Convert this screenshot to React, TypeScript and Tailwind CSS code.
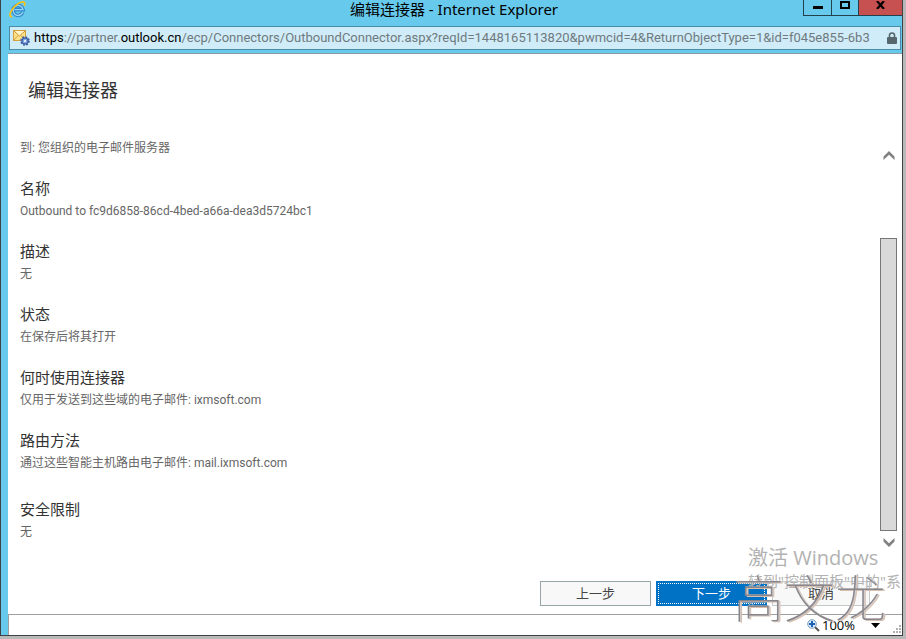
import React from "react";

const sections = [
  { title: "名称", value: "Outbound to fc9d6858-86cd-4bed-a66a-dea3d5724bc1" },
  { title: "描述", value: "无" },
  { title: "状态", value: "在保存后将其打开" },
  { title: "何时使用连接器", value: "仅用于发送到这些域的电子邮件: ixmsoft.com" },
  { title: "路由方法", value: "通过这些智能主机路由电子邮件: mail.ixmsoft.com" },
  { title: "安全限制", value: "无", spaced: true },
];

const IeIcon = () => (
  <svg width="17" height="17" viewBox="0 0 17 17" fill="none">
    <path d="M13.700 11.300A5 5 0 1 1 14 8.600H5.500" stroke="#2f86c8" strokeWidth="3.600" />
    <path d="M13.700 11.300A5 5 0 1 1 14 8.600H5.500" stroke="#9ad6f5" strokeWidth="1.400" />
    <path
      d="M3.200 15.600C.6 16.200.3 13.400 2.300 9.800 4.600 5.600 9.600 1.200 13.600.9c2.600-.1 2.600 1.900 1.600 3.900"
      stroke="#f5c211"
      strokeWidth="1.700"
    />
  </svg>
);

const MailGearIcon = () => (
  <svg width="17" height="16" viewBox="0 0 17 16">
    <rect x=".5" y=".5" width="12" height="10" fill="#fbe087" stroke="#d3a040" />
    <path d="M1 1l5.500 5L12 1" fill="#fff5c9" stroke="#c99636" />
    <path d="M1 10l4-4.500M12 10L8 5.500" stroke="#d9a441" fill="none" />
    <circle
      cx="12"
      cy="11"
      r="3.800"
      fill="#6f93d6"
      stroke="#3d5f9f"
      strokeWidth="2"
      strokeDasharray="1.700 1.280"
    />
    <circle cx="12" cy="11" r="3" fill="#7fa0de" stroke="#3d5f9f" />
    <circle cx="12" cy="11" r="1.200" fill="#e3ecfb" />
  </svg>
);

const LockIcon = () => (
  <svg width="10" height="12" viewBox="0 0 10 12">
    <path
      d="M2.500 6V3.500a2.500 2.500 0 0 1 5 0V6"
      fill="none"
      stroke="#56666d"
      strokeWidth="1.600"
    />
    <rect y="5" width="10" height="7" rx="1" fill="#56666d" />
  </svg>
);

const Chevron = ({ down = false }: { down?: boolean }) => (
  <svg width="12" height="9" viewBox="0 0 12 9">
    <path
      d={
        down
          ? "M.5 0L6 5.200 11.500 0v3.600L6 9 .5 3.600z"
          : "M.5 9L6 3.800 11.500 9V5.400L6 0 .5 5.400z"
      }
      fill="#808080"
    />
  </svg>
);

const MagnifierIcon = () => (
  <svg width="13" height="13" viewBox="0 0 13 13">
    <path d="M8 8l4 4" stroke="#555" strokeWidth="2" />
    <circle cx="5" cy="5" r="4.300" fill="#d8ecfb" stroke="#7a9cb8" />
    <path d="M5 2v6M2 5h6" stroke="#1b62b8" strokeWidth="2" />
  </svg>
);

const TitleBar = () => (
  <header className="flex h-[26px] shrink-0 items-start">
    <div className="flex w-[104px] pt-px pl-2">
      <IeIcon />
    </div>
    <h1 className="flex-1 text-center font-['Noto_Sans','Noto_Sans_CJK_SC',sans-serif] text-[15px] leading-[18px] text-black">
      编辑连接器 - Internet Explorer
    </h1>
    <div className="flex h-4 border-b border-l border-[#23414d]">
      <button
        aria-label="最小化"
        className="flex w-7 items-center justify-center border-r border-[#23414d]"
      >
        <svg width="10" height="3">
          <path d="M0 0h10v3H0z" />
        </svg>
      </button>
      <button aria-label="最大化" className="flex w-[26px] items-start justify-center pt-px">
        <svg width="10" height="8" viewBox="0 0 10 8">
          <path d="M1 1h8v6H1z" fill="none" stroke="#000" strokeWidth="2" />
        </svg>
      </button>
      <button
        aria-label="关闭"
        className="flex w-11 items-start justify-center border-l border-[#23414d] bg-[#c75050] pt-px"
      >
        <svg width="9" height="8" viewBox="0 0 9 8">
          <path d="M1 0l7 8M8 0L1 8" stroke="#000" strokeWidth="2.200" />
        </svg>
      </button>
    </div>
  </header>
);

const AddressBar = () => (
  <div className="mr-px ml-2 flex h-6 shrink-0 items-center border border-[#4a8ba6] bg-[#cfecf8] px-[3px]">
    <MailGearIcon />
    <div className="ml-1 min-w-0 flex-1 overflow-hidden text-[13px] leading-[22px] whitespace-nowrap text-[#707a7e]">
      <span className="text-black">https</span>://partner.
      <span className="text-black">outlook.cn</span>
      /ecp/Connectors/OutboundConnector.aspx?reqId=1448165113820&amp;pwmcid=4&amp;ReturnObjectType=1&amp;id=f045e855-6b3
    </div>
    <div className="ml-[7px]">
      <LockIcon />
    </div>
  </div>
);

const ScrollBar = () => (
  <div className="flex w-[17px] shrink-0 flex-col items-center">
    <Chevron />
    <div className="mt-[78px] mb-[7px] w-full flex-1 border border-[#777] bg-[#d9d9d9]" />
    <Chevron down />
  </div>
);

const StatusBar = () => (
  <footer className="flex h-[21px] shrink-0 items-center justify-end border-t border-l border-[#a0a0a0] font-['Open_Sans',sans-serif]">
    <MagnifierIcon />
    <span className="ml-[2px] text-[13px] leading-5 text-black">100%</span>
    <button aria-label="更改缩放级别" className="ml-4">
      <svg width="9" height="5" viewBox="0 0 9 5">
        <path d="M0 0h9L4.500 5z" />
      </svg>
    </button>
    <svg className="ml-3 self-end" width="10" height="11" viewBox="0 0 10 11" fill="#b0b0b0">
      <path d="M7 1h2v2H7zM4 4h2v2H4zM7 4h2v2H7zM1 7h2v2H1zM4 7h2v2H4zM7 7h2v2H7z" />
    </svg>
  </footer>
);

const Watermarks = () => (
  <div className="pointer-events-none absolute right-0 bottom-0 w-[154px] font-['Open_Sans','Noto_Sans_CJK_SC',sans-serif] text-[#b2b2b2]">
    <div className="text-[20px] leading-7">激活 Windows</div>
    <div className="text-[15px] leading-[18px] whitespace-nowrap">转到"控制面板"中的"系</div>
    <div className="h-[45px] text-[15px] leading-5">。</div>
  </div>
);

const Signature = () => (
  <div className="pointer-events-none absolute right-4 bottom-1 text-[51px] leading-[60px] font-thin whitespace-nowrap text-[#88868b] [text-shadow:1px_0_0_#cfcdd0,2px_1px_0_#d8bfae]">
    高文龙
  </div>
);

const App = () => {
  return (
    <div className="h-screen bg-[#b9b9b9] pr-[3px] pb-[3px] font-['Roboto','Noto_Sans_CJK_SC',sans-serif]">
      <div className="relative flex h-full flex-col overflow-hidden border-r border-b border-l border-[#3f4144] bg-[#67c9ec]">
        <TitleBar />
        <AddressBar />

        <div className="mt-[3px] ml-[7px] flex min-h-0 flex-1 flex-col border-t border-[#8a9ba3] bg-white">
          <h2 className="mt-6 ml-5 text-[18px] leading-[26px] text-[#333]">编辑连接器</h2>

          <main className="mt-[35px] flex min-h-0 flex-1 pr-[5px] pl-3">
            <div className="min-w-0 flex-1 text-[12px] leading-[18px] text-[#666]">
              <p>到: 您组织的电子邮件服务器</p>
              {sections.map((item) => (
                <section key={item.title} className={item.spaced ? "mt-[26px]" : "mt-5"}>
                  <h3 className="text-[15px] leading-[25px] text-[#333]">{item.title}</h3>
                  <p>{item.value}</p>
                </section>
              ))}
            </div>
            <div className="mt-3 flex">
              <ScrollBar />
            </div>
          </main>

          <div className="mt-[34px] mr-8 mb-2 flex justify-end gap-[5px] text-[13px] leading-[21px]">
            <button className="h-[25px] w-[111px] border border-[#96a5a8] bg-[#f8f8f8] text-[#444]">
              上一步
            </button>
            <button className="h-[25px] w-[111px] border border-[#0072c6] bg-[#0072c6] p-px text-white">
              <span className="block border border-dotted border-white leading-[19px]">下一步</span>
            </button>
            <button className="h-[25px] w-[98px] border border-[#c4c9ca] bg-[#f8f8f8] text-[#444]">
              取消
            </button>
          </div>

          <StatusBar />
        </div>

        <Watermarks />
        <Signature />
      </div>
    </div>
  );
};

export default App;
